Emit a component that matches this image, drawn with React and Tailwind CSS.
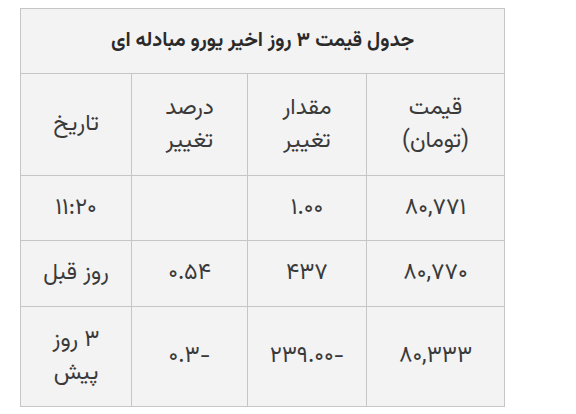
export default function App() {
  const rows = [
    { price: "۸۰,۷۷۱", change: "۱.۰۰", percent: "", date: "۱۱:۲۰", h: "h-[65px]" },
    { price: "۸۰,۷۷۰", change: "۴۳۷", percent: "۰.۵۴", date: "روز قبل", h: "h-[66px]" },
    { price: "۸۰,۳۳۳", change: "-۲۳۹.۰۰", percent: "-۰.۳", date: <>۳ روز<br />پیش</>, h: "h-[100px]" },
  ]

  return (
    <div className="w-[576px] h-[414px] bg-white pt-[8px] pl-[20px]">
      <table
        dir="rtl"
        className="w-[484px] border-collapse bg-[#f3f3f3] text-[#3a3a3a] text-[23px] leading-[33px] font-['Vazirmatn','DejaVu_Sans',sans-serif] table-fixed"
      >
        <colgroup>
          <col className="w-[138px]" />
          <col className="w-[119px]" />
          <col className="w-[116px]" />
          <col className="w-[111px]" />
        </colgroup>
        <tbody>
          <tr className="h-[65px]">
            <td colSpan={4} className="border border-[#c6c6c6] text-center font-bold text-[20px] text-[#2a2a2a]">
              جدول قیمت ۳ روز اخیر یورو مبادله ای
            </td>
          </tr>
          <tr className="h-[102px]">
            <td className="border border-[#c6c6c6] text-center">قیمت<br />(تومان)</td>
            <td className="border border-[#c6c6c6] text-center">مقدار<br />تغییر</td>
            <td className="border border-[#c6c6c6] text-center">درصد<br />تغییر</td>
            <td className="border border-[#c6c6c6] text-center">تاریخ</td>
          </tr>
          {rows.map((r, i) => (
            <tr key={i} className={r.h}>
              <td className="border border-[#c6c6c6] text-center">{r.price}</td>
              <td className="border border-[#c6c6c6] text-center">{r.change}</td>
              <td className="border border-[#c6c6c6] text-center">{r.percent}</td>
              <td className="border border-[#c6c6c6] text-center">{r.date}</td>
            </tr>
          ))}
        </tbody>
      </table>
    </div>
  )
}
